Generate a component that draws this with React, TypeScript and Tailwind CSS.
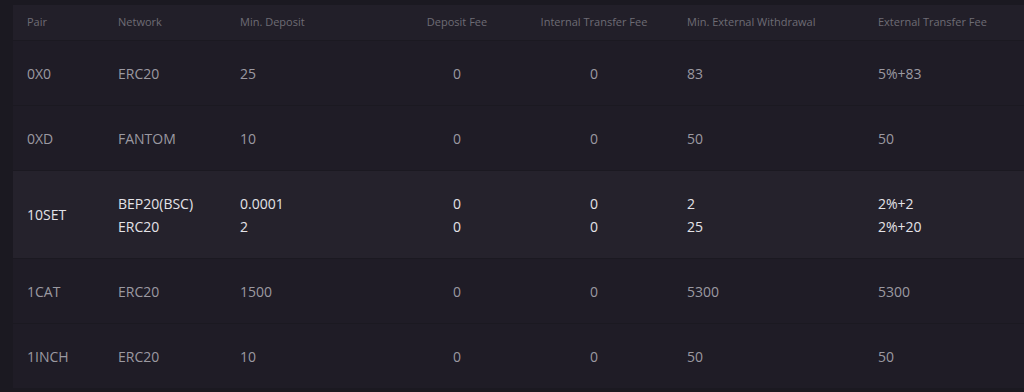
type Entry = { network: string; min: string; dep: string; internal: string; minExt: string; extFee: string };
type Row = { pair: string; entries: Entry[]; active?: boolean };

const rows: Row[] = [
  { pair: "0X0", entries: [{ network: "ERC20", min: "25", dep: "0", internal: "0", minExt: "83", extFee: "5%+83" }] },
  { pair: "0XD", entries: [{ network: "FANTOM", min: "10", dep: "0", internal: "0", minExt: "50", extFee: "50" }] },
  {
    pair: "10SET",
    active: true,
    entries: [
      { network: "BEP20(BSC)", min: "0.0001", dep: "0", internal: "0", minExt: "2", extFee: "2%+2" },
      { network: "ERC20", min: "2", dep: "0", internal: "0", minExt: "25", extFee: "2%+20" },
    ],
  },
  { pair: "1CAT", entries: [{ network: "ERC20", min: "1500", dep: "0", internal: "0", minExt: "5300", extFee: "5300" }] },
  { pair: "1INCH", entries: [{ network: "ERC20", min: "10", dep: "0", internal: "0", minExt: "50", extFee: "50" }] },
];

const cols = "grid grid-cols-[91px_122px_173px_88px_186px_191px_1fr]";

export default function App() {
  return (
    <div className="w-[1024px] h-[392px] overflow-hidden bg-[#1b1921] font-['Open_Sans','Noto_Sans',sans-serif] pt-[5px] pl-[13px]">
      {/* header */}
      <div className={`${cols} h-[35px] items-center bg-[#221f29] text-[11px] text-[#6e6c75] pl-[14px]`}>
        <div>Pair</div>
        <div>Network</div>
        <div>Min. Deposit</div>
        <div className="text-center whitespace-nowrap">Deposit Fee</div>
        <div className="text-center">Internal Transfer Fee</div>
        <div>Min. External Withdrawal</div>
        <div>External Transfer Fee</div>
      </div>

      {rows.map((row) => (
        <div
          key={row.pair}
          className={`${cols} items-center pl-[14px] border-t border-[#1b1921] text-[14px] ${
            row.active ? "h-[88px] bg-[#25222c] text-[#e4e3e8]" : "h-[65px] bg-[#1f1c26] text-[#9b99a1]"
          }`}
        >
          <div>{row.pair}</div>
          <div className="flex flex-col gap-[2px]">
            {row.entries.map((e, i) => <div key={i}>{e.network}</div>)}
          </div>
          <div className="flex flex-col gap-[2px]">
            {row.entries.map((e, i) => <div key={i}>{e.min}</div>)}
          </div>
          <div className="flex flex-col gap-[2px] text-center">
            {row.entries.map((e, i) => <div key={i}>{e.dep}</div>)}
          </div>
          <div className="flex flex-col gap-[2px] text-center">
            {row.entries.map((e, i) => <div key={i}>{e.internal}</div>)}
          </div>
          <div className="flex flex-col gap-[2px]">
            {row.entries.map((e, i) => <div key={i}>{e.minExt}</div>)}
          </div>
          <div className="flex flex-col gap-[2px]">
            {row.entries.map((e, i) => <div key={i}>{e.extFee}</div>)}
          </div>
        </div>
      ))}
    </div>
  );
}
